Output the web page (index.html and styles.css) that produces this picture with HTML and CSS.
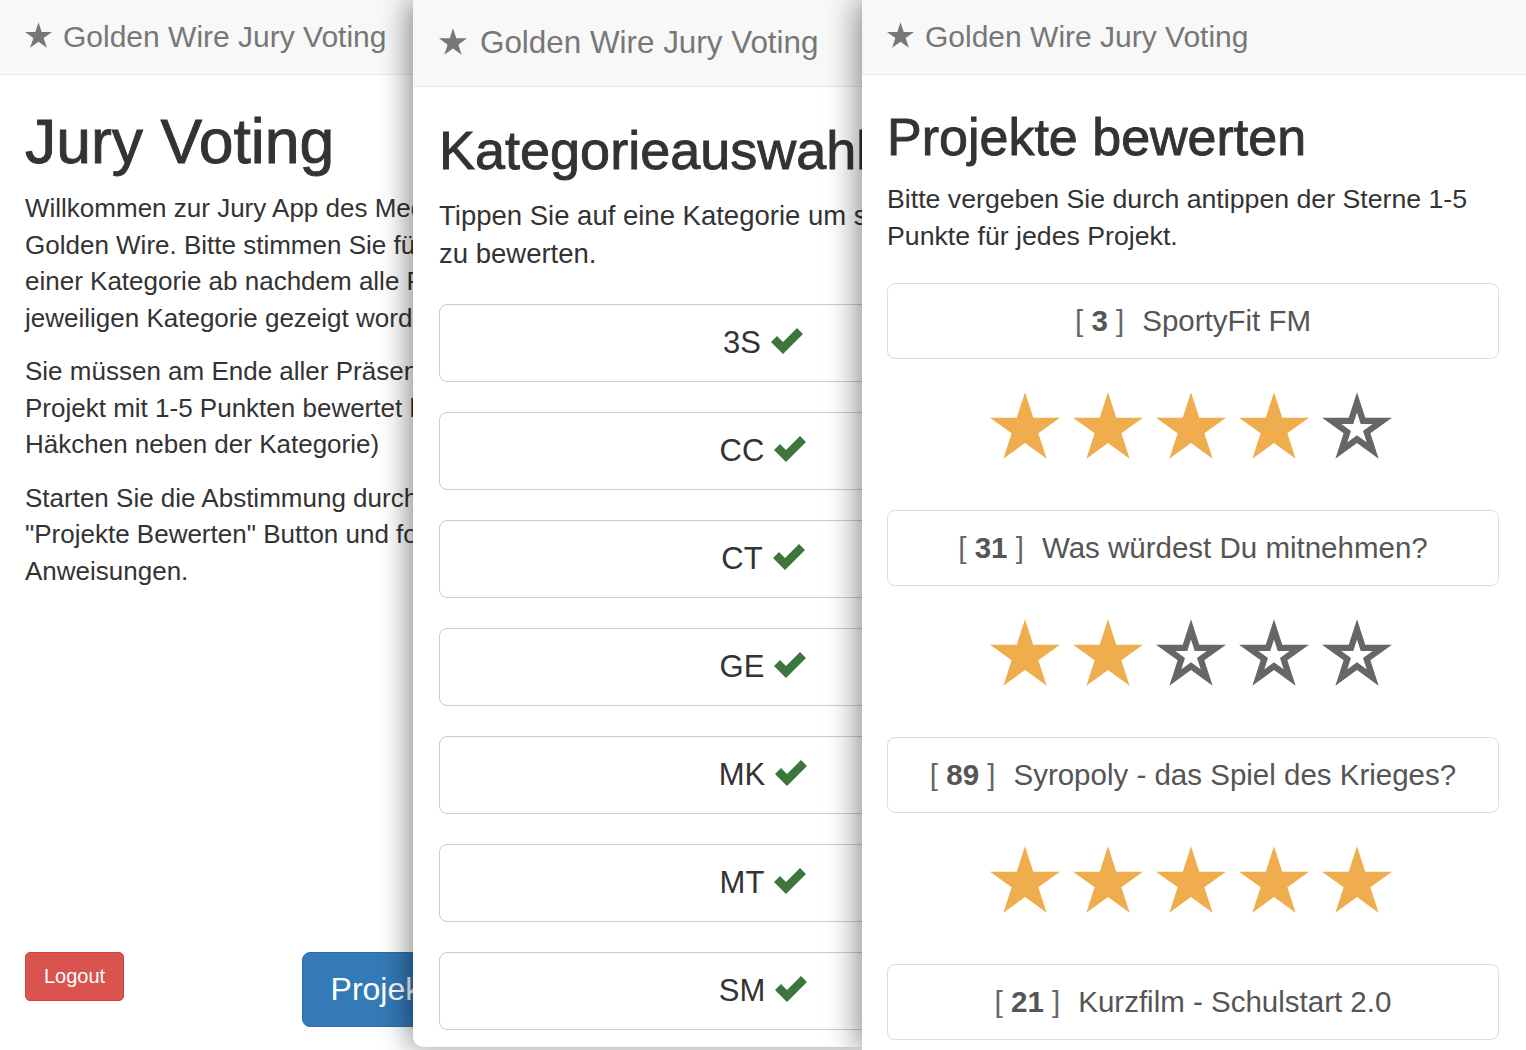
FILE: index.html
```html
<!DOCTYPE html>
<html lang="de">
<head>
<meta charset="utf-8">
<title>Golden Wire Jury Voting</title>
<link rel="stylesheet" href="styles.css">
</head>
<body>
<svg class="defs" width="0" height="0" aria-hidden="true">
  <defs>
    <polygon id="starp" points="0,-50 11.23,-15.45 47.55,-15.45 18.17,5.9 29.39,40.45 0,19.1 -29.39,40.45 -18.17,5.9 -47.55,-15.45 -11.23,-15.45"/>
    <clipPath id="starclip">
      <polygon points="0,-50 11.23,-15.45 47.55,-15.45 18.17,5.9 29.39,40.45 0,19.1 -29.39,40.45 -18.17,5.9 -47.55,-15.45 -11.23,-15.45"/>
    </clipPath>
  </defs>
</svg>

<div class="stage">
  <section class="screen home">
    <div class="inner">
      <header class="navbar">
        <svg class="brand-star" viewBox="-47.55 -50 95.1 90.45"><use href="#starp"/></svg>
        <span class="brand">Golden Wire Jury Voting</span>
      </header>
      <main class="content">
        <h1>Jury Voting</h1>
        <p>Willkommen zur Jury App des Medienwettbewerbs<br>Golden Wire. Bitte stimmen Sie für jedes Projekt<br>einer Kategorie ab nachdem alle Projekte der<br>jeweiligen Kategorie gezeigt worden sind.</p>
        <p>Sie müssen am Ende aller Präsentationen jedes<br>Projekt mit 1-5 Punkten bewertet haben (grünes<br>Häkchen neben der Kategorie)</p>
        <p>Starten Sie die Abstimmung durch klicken auf den<br>"Projekte Bewerten" Button und folgen Sie den<br>Anweisungen.</p>
        <div class="actions">
          <button class="btn btn-danger">Logout</button>
          <button class="btn btn-primary">Projekte Bewerten</button>
        </div>
      </main>
    </div>
  </section>

  <section class="screen cats">
    <div class="inner">
      <header class="navbar">
        <svg class="brand-star" viewBox="-47.55 -50 95.1 90.45"><use href="#starp"/></svg>
        <span class="brand">Golden Wire Jury Voting</span>
      </header>
      <main class="content">
        <h1>Kategorieauswahl</h1>
        <p>Tippen Sie auf eine Kategorie um sie<br>zu bewerten.</p>
        <div class="cat-list">
          <button class="cat-btn">3S <svg class="ok" viewBox="0 0 32 26"><polygon points="0,14 6,8 12,14 26,0 32,6 12,26"/></svg></button>
          <button class="cat-btn">CC <svg class="ok" viewBox="0 0 32 26"><polygon points="0,14 6,8 12,14 26,0 32,6 12,26"/></svg></button>
          <button class="cat-btn">CT <svg class="ok" viewBox="0 0 32 26"><polygon points="0,14 6,8 12,14 26,0 32,6 12,26"/></svg></button>
          <button class="cat-btn">GE <svg class="ok" viewBox="0 0 32 26"><polygon points="0,14 6,8 12,14 26,0 32,6 12,26"/></svg></button>
          <button class="cat-btn">MK <svg class="ok" viewBox="0 0 32 26"><polygon points="0,14 6,8 12,14 26,0 32,6 12,26"/></svg></button>
          <button class="cat-btn">MT <svg class="ok" viewBox="0 0 32 26"><polygon points="0,14 6,8 12,14 26,0 32,6 12,26"/></svg></button>
          <button class="cat-btn">SM <svg class="ok" viewBox="0 0 32 26"><polygon points="0,14 6,8 12,14 26,0 32,6 12,26"/></svg></button>
        </div>
      </main>
    </div>
  </section>

  <section class="screen rate">
    <div class="inner">
      <header class="navbar">
        <svg class="brand-star" viewBox="-47.55 -50 95.1 90.45"><use href="#starp"/></svg>
        <span class="brand">Golden Wire Jury Voting</span>
      </header>
      <main class="content">
        <h1>Projekte bewerten</h1>
        <p>Bitte vergeben Sie durch antippen der Sterne 1-5<br>Punkte für jedes Projekt.</p>

        <div class="project"><span class="label"><span class="br">[ </span><b>3</b><span class="br"> ]</span><span class="title">SportyFit FM</span></span></div>
        <div class="stars">
          <svg class="star on" viewBox="-47.55 -50 95.1 90.45"><use href="#starp"/></svg>
          <svg class="star on" viewBox="-47.55 -50 95.1 90.45"><use href="#starp"/></svg>
          <svg class="star on" viewBox="-47.55 -50 95.1 90.45"><use href="#starp"/></svg>
          <svg class="star on" viewBox="-47.55 -50 95.1 90.45"><use href="#starp"/></svg>
          <svg class="star off" viewBox="-47.55 -50 95.1 90.45"><use href="#starp" clip-path="url(#starclip)"/></svg>
        </div>

        <div class="project"><span class="label"><span class="br">[ </span><b>31</b><span class="br"> ]</span><span class="title">Was würdest Du mitnehmen?</span></span></div>
        <div class="stars">
          <svg class="star on" viewBox="-47.55 -50 95.1 90.45"><use href="#starp"/></svg>
          <svg class="star on" viewBox="-47.55 -50 95.1 90.45"><use href="#starp"/></svg>
          <svg class="star off" viewBox="-47.55 -50 95.1 90.45"><use href="#starp" clip-path="url(#starclip)"/></svg>
          <svg class="star off" viewBox="-47.55 -50 95.1 90.45"><use href="#starp" clip-path="url(#starclip)"/></svg>
          <svg class="star off" viewBox="-47.55 -50 95.1 90.45"><use href="#starp" clip-path="url(#starclip)"/></svg>
        </div>

        <div class="project"><span class="label"><span class="br">[ </span><b>89</b><span class="br"> ]</span><span class="title">Syropoly - das Spiel des Krieges?</span></span></div>
        <div class="stars">
          <svg class="star on" viewBox="-47.55 -50 95.1 90.45"><use href="#starp"/></svg>
          <svg class="star on" viewBox="-47.55 -50 95.1 90.45"><use href="#starp"/></svg>
          <svg class="star on" viewBox="-47.55 -50 95.1 90.45"><use href="#starp"/></svg>
          <svg class="star on" viewBox="-47.55 -50 95.1 90.45"><use href="#starp"/></svg>
          <svg class="star on" viewBox="-47.55 -50 95.1 90.45"><use href="#starp"/></svg>
        </div>

        <div class="project"><span class="label"><span class="br">[ </span><b>21</b><span class="br"> ]</span><span class="title">Kurzfilm - Schulstart 2.0</span></span></div>
      </main>
    </div>
  </section>
</div>
</body>
</html>
```

FILE: styles.css
```css
* { box-sizing: border-box; }

html, body {
  margin: 0;
  padding: 0;
}

body {
  width: 1526px;
  height: 1050px;
  overflow: hidden;
  background: #ffffff;
  font-family: "Liberation Sans", Arial, sans-serif;
  color: #333333;
}

.defs {
  position: absolute;
  width: 0;
  height: 0;
}

.stage {
  display: flex;
  width: 1526px;
  height: 1050px;
}

.screen {
  position: relative;
  flex: none;
  overflow: hidden;
  background: #ffffff;
  height: 1047px;
}

.home {
  width: 413px;
  z-index: 1;
  border-bottom-left-radius: 10px;
}

.cats {
  width: 449px;
  z-index: 2;
  border-bottom-left-radius: 10px;
  box-shadow: -6px 0 28px rgba(0, 0, 0, 0.42);
}

.rate {
  width: 664px;
  height: 1050px;
  z-index: 3;
  box-shadow: -6px 0 28px rgba(0, 0, 0, 0.42);
}

.inner {
  display: flex;
  flex-direction: column;
  height: 100%;
}

.home .inner { width: 661px; }
.cats .inner { width: 700px; }
.rate .inner { width: 664px; }

/* navbar */
.navbar {
  flex: none;
  display: flex;
  align-items: center;
  background: #f8f8f8;
  border-bottom: 1px solid #e7e7e7;
  color: #777777;
  white-space: nowrap;
}

.brand-star {
  fill: #777777;
  flex: none;
}

.home .navbar,
.rate .navbar {
  height: 75px;
  padding: 0 0 1px 25px;
  font-size: 30px;
}

.home .brand-star,
.rate .brand-star {
  width: 27px;
  height: 26px;
  margin-right: 11px;
  margin-top: -4px;
}

.cats .navbar {
  height: 87px;
  padding: 0 0 0 26px;
  font-size: 31.4px;
}

.cats .brand-star {
  width: 28px;
  height: 27px;
  margin-right: 13px;
  margin-top: -4px;
}

/* content */
.content {
  flex: 1;
  display: flex;
  flex-direction: column;
}

h1 {
  font-weight: 400;
  margin: 0;
  white-space: nowrap;
  color: #333333;
  -webkit-text-stroke: 0.9px #333333;
}

p {
  margin: 0;
  white-space: nowrap;
}

.home .content { padding: 0 25px 20px 25px; }

.home h1 {
  font-size: 62.5px;
  line-height: 68px;
  margin: 32px 0 15px;
}

.home p {
  font-size: 26px;
  line-height: 36.5px;
  margin-bottom: 17px;
}

.actions {
  margin-top: auto;
  display: flex;
  align-items: flex-start;
}

.btn {
  font-family: "Liberation Sans", Arial, sans-serif;
  color: #ffffff;
  border: 1px solid transparent;
  padding: 0;
  cursor: pointer;
}

.btn-danger {
  width: 99px;
  height: 49px;
  font-size: 20px;
  background: #d9534f;
  border-color: #d43f3a;
  border-radius: 5px;
}

.btn-primary {
  margin-left: auto;
  margin-right: 15px;
  height: 75px;
  padding: 0 28px;
  font-size: 32px;
  background: #337ab7;
  border-color: #2e6da4;
  border-radius: 8px;
}

/* categories */
.cats .content { padding: 0 26px; }

.cats h1 {
  font-size: 54px;
  line-height: 61px;
  margin: 33px 0 16px;
}

.cats p {
  font-size: 27.5px;
  line-height: 38px;
  margin-bottom: 31px;
}

.cat-list {
  display: flex;
  flex-direction: column;
  gap: 30px;
}

.cat-btn {
  height: 78px;
  display: flex;
  align-items: center;
  justify-content: center;
  gap: 10px;
  background: #ffffff;
  border: 1px solid #cccccc;
  border-radius: 8px;
  font-family: "Liberation Sans", Arial, sans-serif;
  font-size: 31px;
  color: #333333;
  padding: 0;
}

.ok {
  width: 32px;
  height: 26px;
  fill: #3c763d;
  margin-top: -4px;
}

/* rating */
.rate .content { padding: 0 27px 0 25px; }

.rate h1 {
  font-size: 52px;
  line-height: 55px;
  margin: 35px 0 16px;
}

.rate p {
  font-size: 26.7px;
  line-height: 36.5px;
  margin-bottom: 29px;
}

.project {
  flex: none;
  height: 76px;
  display: flex;
  align-items: center;
  justify-content: center;
  border: 1px solid #dddddd;
  border-radius: 8px;
  font-size: 29.5px;
  color: #555555;
}

.label { white-space: pre; }
.project .br { color: #666666; }
.project b { font-weight: 700; color: #555555; }
.project .title { margin-left: 18px; }

.stars {
  flex: none;
  display: flex;
  justify-content: center;
  gap: 13px;
  height: 67px;
  margin: 33px 0 51px;
  padding-right: 5px;
}

.star {
  width: 70px;
  height: 67px;
}

.star.on { fill: #f0ad4e; }

.star.off {
  fill: #ffffff;
  stroke: #666666;
  stroke-width: 17;
  stroke-linejoin: miter;
}
```
